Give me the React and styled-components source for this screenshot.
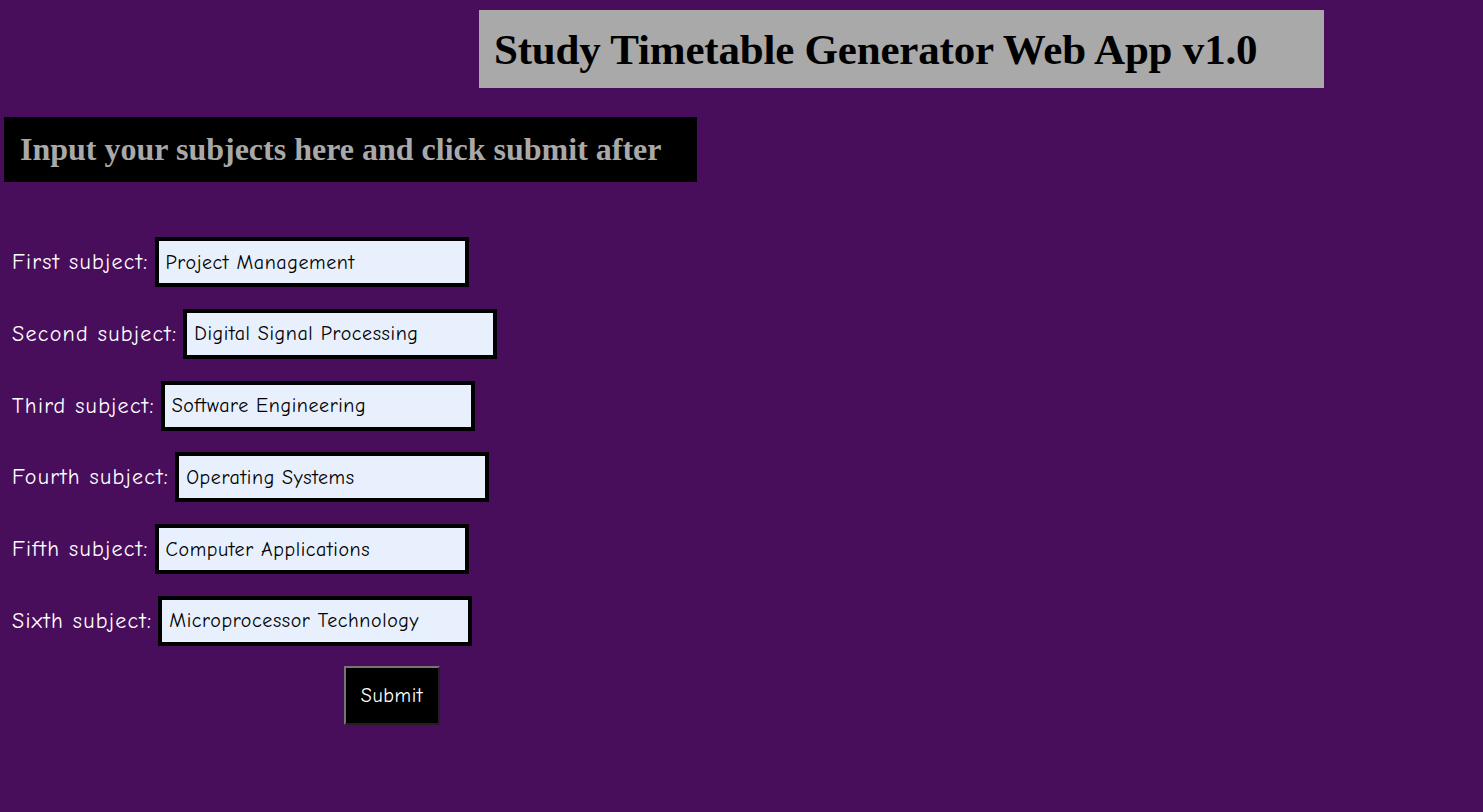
import styled, { createGlobalStyle } from 'styled-components';

const GlobalStyle = createGlobalStyle`
  html, body {
    margin: 0;
    padding: 0;
    background-color: #490e5b;
  }
  body {
    min-height: 812px;
  }
`;

const comicStack = `'Comic Sans MS', 'Comic Neue', 'DejaVu Sans', sans-serif`;

const Page = styled.div`
  display: flex;
  flex-direction: column;
  padding-top: 10px;
`;

const TitleBar = styled.h1`
  margin: 0 0 0 479px;
  width: 845px;
  height: 78px;
  box-sizing: border-box;
  padding-left: 15px;
  display: flex;
  align-items: center;
  background-color: #a9a9a9;
  color: #000;
  font-family: 'Liberation Serif', 'Times New Roman', serif;
  font-weight: bold;
  font-size: 43px;
  letter-spacing: -0.2px;
`;

const SubHeading = styled.h2`
  margin: 29px 0 0 4px;
  width: 693px;
  height: 65px;
  box-sizing: border-box;
  padding-left: 16px;
  display: flex;
  align-items: center;
  background-color: #000;
  color: #a9a9a9;
  font-family: 'Liberation Serif', 'Times New Roman', serif;
  font-weight: bold;
  font-size: 32px;
`;

const SubjectForm = styled.form`
  display: flex;
  flex-direction: column;
  gap: 21.8px;
  margin-top: 55px;
  padding-left: 12px;
`;

const Row = styled.div`
  display: flex;
  align-items: center;
  gap: 6px;
  height: 50px;
`;

const Label = styled.label`
  color: #fff;
  font-family: ${comicStack};
  font-size: 22px;
  letter-spacing: 1.3px;
  white-space: nowrap;
`;

const SubjectInput = styled.input`
  width: 314px;
  height: 50px;
  box-sizing: border-box;
  border: 4px solid #000;
  background-color: #e8f0fe;
  padding: 0 7px;
  color: #000;
  font-family: ${comicStack};
  font-size: 20px;
  letter-spacing: 0.6px;
  outline: none;
`;

const SubmitButton = styled.button`
  align-self: flex-start;
  margin-left: 332px;
  margin-top: -2px;
  width: 96px;
  height: 59px;
  background-color: #000;
  color: #fff;
  border: 2px outset #767676;
  font-family: ${comicStack};
  font-size: 20px;
  letter-spacing: 0.6px;
  cursor: pointer;
`;

const subjects = [
  { label: 'First subject:', value: 'Project Management' },
  { label: 'Second subject:', value: 'Digital Signal Processing' },
  { label: 'Third subject:', value: 'Software Engineering' },
  { label: 'Fourth subject:', value: 'Operating Systems' },
  { label: 'Fifth subject:', value: 'Computer Applications' },
  { label: 'Sixth subject:', value: 'Microprocessor Technology' },
];

function App() {
  return (
    <>
      <GlobalStyle />
      <Page>
        <TitleBar>Study Timetable Generator Web App v1.0</TitleBar>
        <SubHeading>Input your subjects here and click submit after</SubHeading>
        <SubjectForm onSubmit={(e) => e.preventDefault()}>
          {subjects.map((s, i) => (
            <Row key={i}>
              <Label htmlFor={'subject' + i}>{s.label}</Label>
              <SubjectInput id={'subject' + i} type='text' defaultValue={s.value} />
            </Row>
          ))}
          <SubmitButton type='submit'>Submit</SubmitButton>
        </SubjectForm>
      </Page>
    </>
  );
}

export default App;
